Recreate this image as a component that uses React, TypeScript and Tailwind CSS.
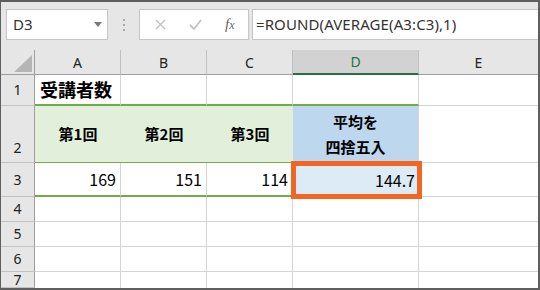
import React from 'react'

const JP = { fontFamily: '"Noto Sans CJK JP", "Noto Sans", sans-serif' }
const UI = { fontFamily: '"Noto Sans", "Open Sans", sans-serif' }

const COLS = ['A', 'B', 'C', 'D', 'E']
const ROW_H = ['h-[31px]', 'h-[57px]', 'h-[34px]', 'h-[25px]', 'h-[25px]', 'h-[25px]', 'h-[16px]']

function RowHeader({ n, selected, bottom }: { n: number; selected?: boolean; bottom?: boolean }) {
  return (
    <div
      className={`flex justify-center border-b border-[#c2c2c2] text-[14px] leading-[18px] ${ROW_H[n - 1]} ${
        bottom ? 'items-end pb-[5px]' : 'items-center'
      } ${
        selected
          ? 'bg-[#d2d2d2] text-[#217346] border-r-2 border-r-[#217346]'
          : 'bg-[#e6e6e6] text-[#222] border-r border-r-[#9e9e9e]'
      }`}
      style={UI}
    >
      {n}
    </div>
  )
}

export default function App() {
  return (
    <div className="w-[540px] h-[290px] overflow-hidden bg-[#e6e6e6] border-t-2 border-r-2 border-b-2 border-l border-[#5f5f5f] flex flex-col">
      {/* Formula bar */}
      <div className="h-[48px] flex items-start pt-[7px] pl-[5px] shrink-0">
        <div className="w-[102px] h-[31px] bg-white border border-[#c6c6c6] flex items-center justify-between pl-[6px] pr-[5px]">
          <span className="text-[15px] text-[#333]" style={UI}>D3</span>
          <svg width="8" height="5" viewBox="0 0 8 5"><path d="M0 0h8L4 5z" fill="#7a7a7a" /></svg>
        </div>
        <div className="w-[31px] h-[31px] flex flex-col items-center justify-center gap-[3px]">
          <span className="w-[2px] h-[2px] bg-[#a8a8a8]" />
          <span className="w-[2px] h-[2px] bg-[#a8a8a8]" />
          <span className="w-[2px] h-[2px] bg-[#a8a8a8]" />
        </div>
        <div className="w-[110px] h-[31px] bg-white border border-[#c6c6c6] flex items-center pl-[15px]">
          <svg width="11" height="11" viewBox="0 0 11 11"><path d="M1 1l9 9M10 1l-9 9" stroke="#c2c2c2" strokeWidth="1.4" /></svg>
          <svg className="ml-[23px]" width="13" height="11" viewBox="0 0 13 11"><path d="M1 6l4 4 7-9" stroke="#c2c2c2" strokeWidth="1.8" fill="none" /></svg>
          <span className="ml-[23px] text-[15px] italic text-[#666]" style={{ fontFamily: '"Liberation Serif", serif' }}>
            f<span className="text-[12px]">x</span>
          </span>
        </div>
        <div className="ml-[3px] flex-1 h-[31px] bg-white border border-[#c6c6c6] border-r-0 flex items-center pl-[3px]">
          <span className="text-[15px] text-[#333] tracking-[0.1px]" style={UI}>=ROUND(AVERAGE(A3:C3),1)</span>
        </div>
      </div>

      {/* Grid */}
      <div className="grid grid-cols-[34px_86px_86px_86px_126px_1fr] bg-white flex-1">
        {/* column headers */}
        <div className="h-[25px] bg-[#e6e6e6] border-r border-b border-[#9e9e9e] flex items-end justify-end p-[2px]">
          <svg width="18" height="17" viewBox="0 0 18 17"><path d="M18 0V17H0z" fill="#b5b5b5" /></svg>
        </div>
        {COLS.map((c) =>
          c === 'D' ? (
            <div key={c} className="h-[25px] bg-[#d2d2d2] border-r border-r-[#c0c0c0] border-b-2 border-b-[#217346] flex items-center justify-center text-[14px] text-[#217346]" style={UI}>
              {c}
            </div>
          ) : (
            <div key={c} className={`h-[25px] bg-[#e6e6e6] border-b border-b-[#9e9e9e] flex items-center justify-center text-[14px] text-[#222] ${c === 'E' ? '' : 'border-r border-r-[#c0c0c0]'}`} style={UI}>
              {c}
            </div>
          )
        )}

        {/* row 1 */}
        <RowHeader n={1} />
        <div className="h-[31px] border-r border-[#d4d4d4] border-b-2 border-b-[#70ad47] flex items-center pl-[5px] text-[18px] font-bold text-black whitespace-nowrap" style={JP}>
          受講者数
        </div>
        <div className="border-r border-[#d4d4d4] border-b-2 border-b-[#70ad47]" />
        <div className="border-r border-[#d4d4d4] border-b-2 border-b-[#70ad47]" />
        <div className="border-r border-[#d4d4d4] border-b-2 border-b-[#70ad47]" />
        <div className="border-b border-[#d4d4d4]" />

        {/* row 2 */}
        <RowHeader n={2} bottom />
        {['第1回', '第2回', '第3回'].map((t) => (
          <div key={t} className="h-[57px] bg-[#e2efda] border-b border-b-[#70ad47] flex items-center justify-center text-[15px] font-bold text-black" style={JP}>
            {t}
          </div>
        ))}
        <div className="bg-[#bdd7ee] border-r border-r-[#d4d4d4] border-b border-b-[#bdd7ee] flex flex-col items-center justify-center text-[15px] font-bold leading-[25px] text-black" style={JP}>
          <span>平均を</span>
          <span>四捨五入</span>
        </div>
        <div className="border-b border-[#d4d4d4]" />

        {/* row 3 */}
        <RowHeader n={3} />
        {['169', '151', '114'].map((v) => (
          <div key={v} className="h-[34px] border-r border-r-[#d4d4d4] border-b-2 border-b-[#70ad47] flex items-center justify-end pr-[4px] text-[16px] text-black" style={JP}>
            {v}
          </div>
        ))}
        <div className="relative bg-[#ddebf7] border-r border-r-[#d4d4d4] border-b border-b-[#d4d4d4] flex items-center justify-end pr-[3px] text-[16px] text-black" style={JP}>
          <span className="relative z-10">144.7</span>
          <div className="absolute -left-[2px] -top-[2px] w-[131px] h-[38px] border-[5px] border-[#f26522]" />
        </div>
        <div className="border-b border-[#d4d4d4]" />

        {/* rows 4-7 */}
        {[4, 5, 6, 7].map((n) => (
          <React.Fragment key={n}>
            <RowHeader n={n} />
            {COLS.map((c) => (
              <div key={c} className={`${ROW_H[n - 1]} ${n === 7 ? '' : 'border-b'} border-[#d4d4d4] ${c === 'E' ? '' : 'border-r'}`} />
            ))}
          </React.Fragment>
        ))}
      </div>
    </div>
  )
}
